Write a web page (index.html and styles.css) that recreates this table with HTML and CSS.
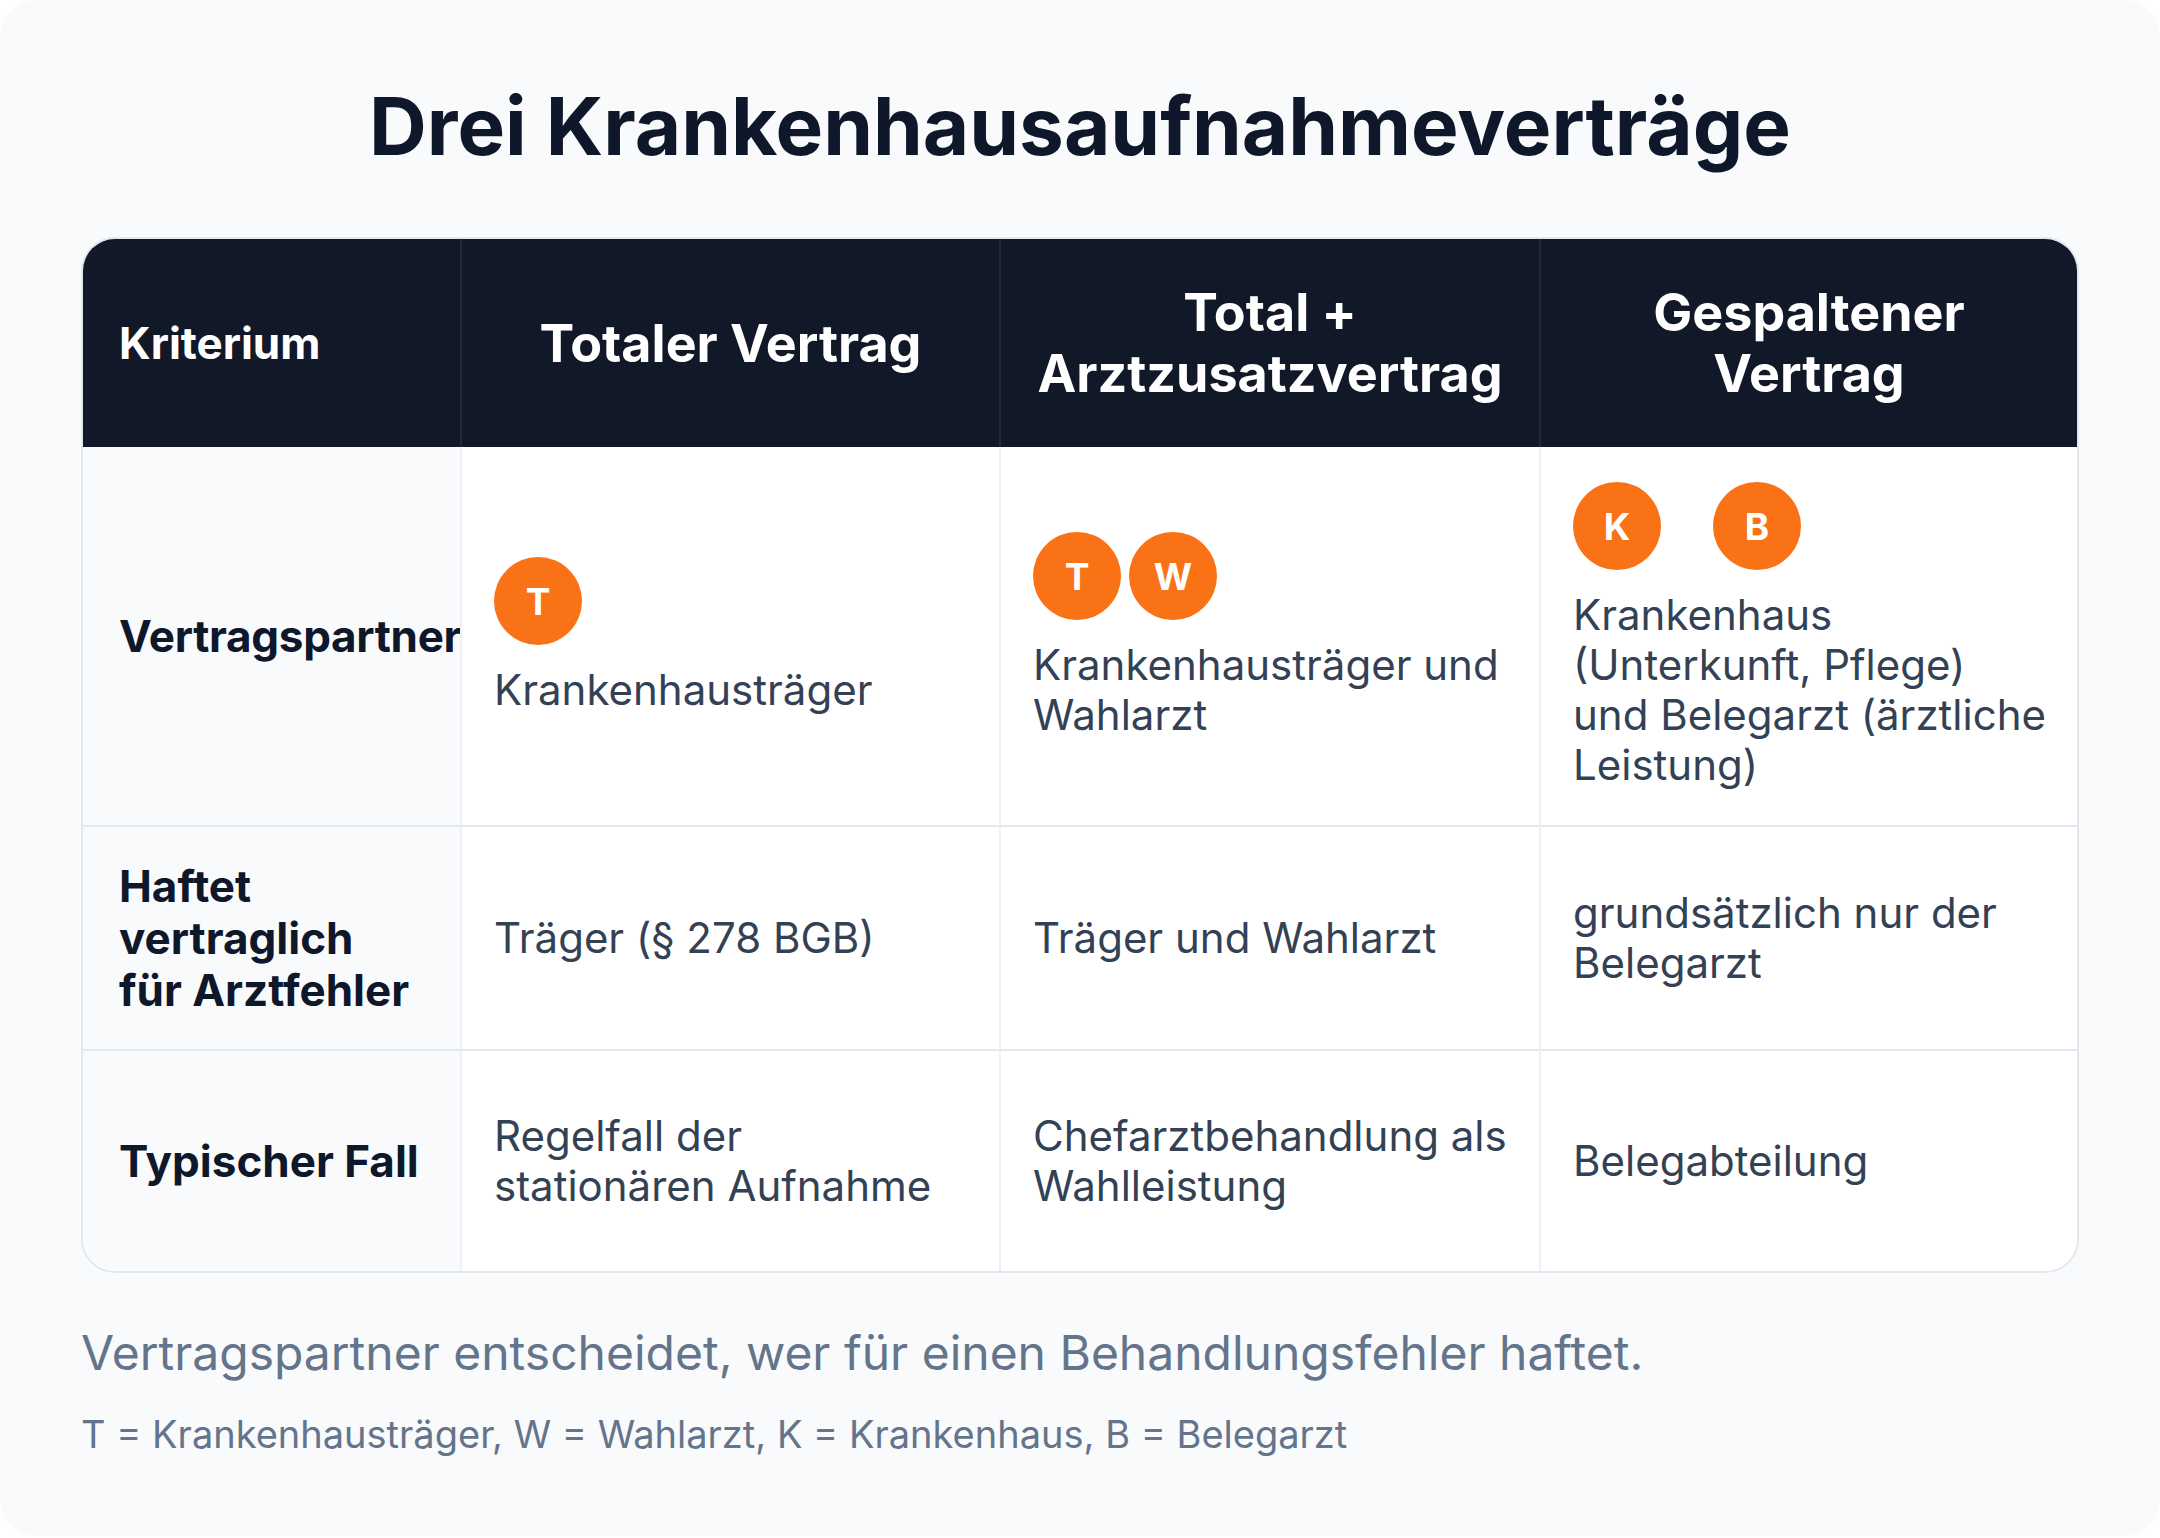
FILE: index.html
```html
<!DOCTYPE html>
<html lang="de">
<head>
<meta charset="utf-8">
<title>Drei Krankenhausaufnahmeverträge</title>
<link rel="stylesheet" href="styles.css">
</head>
<body>
<div class="card">
  <h1 class="title">Drei Krankenhausaufnahmeverträge</h1>
  <div class="table">
    <div class="th th-first">Kriterium</div>
    <div class="th">Totaler Vertrag</div>
    <div class="th">Total +<br>Arztzusatzvertrag</div>
    <div class="th">Gespaltener<br>Vertrag</div>

    <div class="td label row1">Vertragspartner</div>
    <div class="td row1">
      <div class="badges"><span class="badge">T</span></div>
      <div class="text">Krankenhausträger</div>
    </div>
    <div class="td row1">
      <div class="badges"><span class="badge">T</span><span class="badge">W</span></div>
      <div class="text">Krankenhausträger und Wahlarzt</div>
    </div>
    <div class="td row1 last">
      <div class="badges badges-wide"><span class="badge">K</span><span class="badge">B</span></div>
      <div class="text">Krankenhaus (Unterkunft, Pflege) und Belegarzt (ärztliche Leistung)</div>
    </div>

    <div class="td label rowx">Haftet vertraglich für Arztfehler</div>
    <div class="td rowx"><div class="text">Träger (§ 278 BGB)</div></div>
    <div class="td rowx"><div class="text">Träger und Wahlarzt</div></div>
    <div class="td rowx last"><div class="text">grundsätzlich nur der Belegarzt</div></div>

    <div class="td label rowx">Typischer Fall</div>
    <div class="td rowx"><div class="text">Regelfall der stationären Aufnahme</div></div>
    <div class="td rowx"><div class="text">Chefarztbehandlung als Wahlleistung</div></div>
    <div class="td rowx last"><div class="text">Belegabteilung</div></div>
  </div>
  <p class="summary">Vertragspartner entscheidet, wer für einen Behandlungsfehler haftet.</p>
  <p class="legend">T = Krankenhausträger, W = Wahlarzt, K = Krankenhaus, B = Belegarzt</p>
</div>
</body>
</html>
```

FILE: styles.css
```css
html, body {
  margin: 0;
  padding: 0;
  background: #ffffff;
}

body {
  font-family: Inter, "Noto Sans", "Liberation Sans", sans-serif;
}

.card {
  width: 2160px;
  min-height: 1536px;
  box-sizing: border-box;
  background: #f8fafc;
  border-radius: 36px;
  padding: 78px 81px 40px 81px;
}

.title {
  margin: 0 0 63px 0;
  text-align: center;
  font-size: 80px;
  line-height: 96px;
  font-weight: 700;
  color: #0f172a;
}

.table {
  display: grid;
  grid-template-columns: 377px 539px 540px 1fr;
  border: 2px solid #e2e8f0;
  border-radius: 34px;
  overflow: hidden;
  background: #ffffff;
}

.th {
  background: #111827;
  color: #ffffff;
  font-weight: 700;
  font-size: 52px;
  line-height: 61px;
  padding: 43px 16px;
  text-align: center;
  display: flex;
  align-items: center;
  justify-content: center;
  border-left: 2px solid #1e293b;
}

.th-first {
  border-left: none;
  justify-content: flex-start;
  text-align: left;
  font-size: 44px;
  padding-left: 36px;
}

.td {
  background: #ffffff;
  border-left: 2px solid #eef2f6;
  border-top: 2px solid #e2e8f0;
  padding: 33px 27px 33px 32px;
  display: flex;
  flex-direction: column;
  justify-content: center;
  align-items: flex-start;
  min-width: 0;
  overflow: hidden;
  color: #334155;
  font-size: 42px;
  line-height: 50px;
}

.td.last {
  padding-right: 31px;
}

.td.row1 {
  border-top: none;
  padding-top: 35px;
  padding-bottom: 35px;
}

.td.rowx {
  box-sizing: border-box;
  min-height: 222px;
}

.td.label {
  background: #f8fafc;
  border-left: none;
  padding-left: 36px;
  padding-right: 40px;
  font-size: 44px;
  line-height: 52px;
  font-weight: 700;
  color: #0f172a;
}

.label.row1 {
  white-space: nowrap;
  padding-right: 0;
  letter-spacing: -0.3px;
}

.badges {
  display: flex;
  gap: 8px;
  margin-bottom: 20px;
}

.badges-wide {
  gap: 52px;
}

.badge {
  width: 88px;
  height: 88px;
  border-radius: 50%;
  background: #f97316;
  color: #ffffff;
  font-weight: 700;
  font-size: 37px;
  line-height: 1;
  display: flex;
  align-items: center;
  justify-content: center;
}

.summary {
  margin: 51px 0 0 0;
  font-size: 48px;
  line-height: 58px;
  color: #64748b;
}

.legend {
  margin: 29px 0 0 0;
  font-size: 38px;
  line-height: 46px;
  color: #64748b;
}
```
